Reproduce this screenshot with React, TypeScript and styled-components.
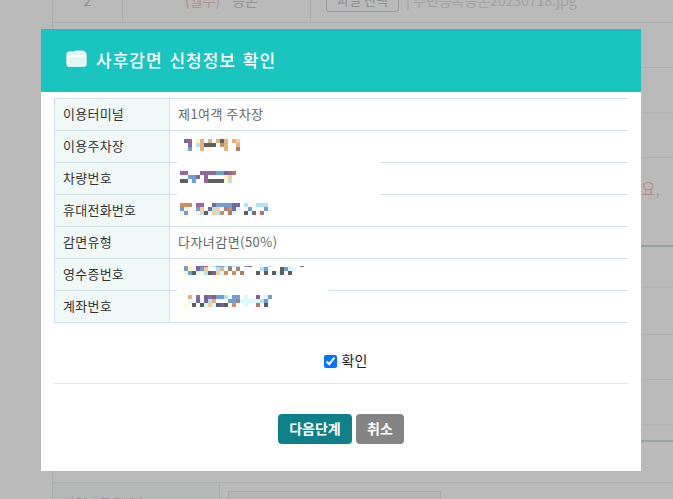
import React from 'react';
import styled, { createGlobalStyle } from 'styled-components';

const Global = createGlobalStyle`
  html, body { margin: 0; padding: 0; background: #fff; }
  body { font-family: "Noto Sans CJK KR", "Noto Sans", sans-serif; }
  #root { width: 673px; height: 499px; overflow: hidden; }
`;

const Page = styled.div`
  position: relative;
  width: 673px;
  height: 499px;
  overflow: hidden;
  background: #fff;
`;

const BackTable = styled.div`
  margin: -23px 0 0 52px;
  display: flex;
  flex-direction: column;
  border-left: 1px solid #ececec;
`;

const BackRow = styled.div<{ $h: number; $thick?: boolean }>`
  height: ${p => p.$h}px;
  box-sizing: border-box;
  display: flex;
  align-items: center;
  flex: none;
  border-bottom: ${p => (p.$thick ? '2px solid #cbe3e2' : '1px solid #eff0f0')};
`;

const NumCell = styled.div`
  width: 69px;
  height: 100%;
  display: flex;
  align-items: center;
  justify-content: center;
  border-right: 1px solid #eeeeee;
  font-size: 14px;
  color: #c4c4c4;
`;

const TypeCell = styled.div`
  width: 188px;
  height: 100%;
  box-sizing: border-box;
  padding-left: 62px;
  display: flex;
  align-items: center;
  gap: 12px;
  border-right: 1px solid #eeeeee;
  font-size: 14px;
  color: #cccccc;
`;

const Pink = styled.span`
  color: #f0c6c6;
`;

const FileCell = styled.div`
  padding-left: 15px;
  display: flex;
  align-items: center;
  gap: 7px;
  font-size: 14px;
  color: #dddddd;
  white-space: nowrap;
`;

const FileButton = styled.div`
  width: 73px;
  height: 24px;
  box-sizing: border-box;
  border: 1px solid #cfcfcf;
  border-radius: 3px;
  display: flex;
  align-items: center;
  justify-content: center;
  font-size: 13px;
  color: #c4c4c4;
`;

const OverflowNote = styled.div`
  align-self: flex-start;
  margin: 18px 0 0 588px;
  font-size: 16px;
  font-weight: 300;
  line-height: 24px;
  color: #f0b4b4;
  white-space: nowrap;
`;

const BottomLabel = styled.div`
  width: 167px;
  height: 100%;
  box-sizing: border-box;
  padding: 11px 0 0 10px;
  background: #f8fdfb;
  border-right: 1px solid #eeeeee;
  font-size: 13px;
  line-height: 18px;
  color: #c8c8c8;
  white-space: nowrap;
`;

const BottomField = styled.div`
  width: 213px;
  height: 30px;
  margin: 8px 0 0 8px;
  align-self: flex-start;
  box-sizing: border-box;
  border: 1px solid #e8e8e8;
  background: #fbf9f9;
`;

const Backdrop = styled.div`
  position: absolute;
  inset: 0;
  background: rgba(0, 0, 0, 0.27);
`;

const Modal = styled.div`
  position: absolute;
  left: 41px;
  top: 29px;
  width: 600px;
  height: 442px;
  background: #fff;
  display: flex;
  flex-direction: column;
`;

const Header = styled.div`
  height: 63px;
  flex: none;
  background: #1ac4bf;
  display: flex;
  align-items: center;
  gap: 9px;
  padding-left: 25px;
`;

const FolderSvg = styled.svg`
  flex: none;
  margin-bottom: 5px;
`;

const Title = styled.h2`
  margin: 0 0 3px;
  font-size: 17px;
  font-weight: 500;
  letter-spacing: 1px;
  word-spacing: 2px;
  color: #fff;
`;

const Body = styled.div`
  padding: 6px 13px 0;
  display: flex;
  flex-direction: column;
`;

const InfoTable = styled.table`
  width: 574px;
  border-collapse: collapse;
  table-layout: fixed;
`;

const Label = styled.th`
  width: 115px;
  height: 32px;
  box-sizing: border-box;
  padding: 0 0 2px 8px;
  background: #f1f9f8;
  border: 1px solid #d2e3e6;
  font-size: 13px;
  font-weight: 400;
  letter-spacing: 0.25px;
  text-align: left;
  color: #333;
`;

const Value = styled.td`
  position: relative;
  height: 32px;
  box-sizing: border-box;
  padding: 0 0 2px 8px;
  border-top: 1px solid #d2e3e6;
  border-bottom: 1px solid #d2e3e6;
  font-size: 13px;
  letter-spacing: 0.45px;
  color: #666;
`;

const Mosaic = styled.svg<{ $x: number; $y: number }>`
  position: absolute;
  left: ${p => p.$x}px;
  top: ${p => p.$y}px;
  display: block;
`;

const LineMask = styled.span<{ $w: number }>`
  position: absolute;
  left: 7px;
  bottom: -2px;
  width: ${p => p.$w}px;
  height: 3px;
  background: #fff;
`;

const ConfirmRow = styled.label`
  margin-top: 30px;
  height: 16px;
  padding: 0 0 0 9px;
  display: flex;
  align-items: center;
  justify-content: center;
  gap: 5px;
  font-size: 14px;
  line-height: 16px;
  color: #222;
`;

const ConfirmText = styled.span`
  margin-top: -2px;
`;

const Check = styled.input`
  margin: 0;
  width: 13px;
  height: 13px;
  accent-color: #0075ff;
`;

const Divider = styled.hr`
  margin: 14px 0 0;
  border: 0;
  border-top: 1px solid #e3e8e8;
`;

const Actions = styled.div`
  margin-top: 30px;
  display: flex;
  justify-content: center;
  gap: 4px;
`;

const Button = styled.button<{ $tone: string; $w: number }>`
  width: ${p => p.$w}px;
  height: 30px;
  padding: 0 0 3px;
  border: 0;
  border-radius: 4px;
  background: ${p => p.$tone};
  color: #fff;
  font-family: inherit;
  font-size: 14px;
  font-weight: 700;
`;

const palette: Record<string, string> = {
  p: '#93689c',
  u: '#74669f',
  b: '#6f9fd8',
  l: '#b4e3f3',
  c: '#d8fbff',
  y: '#fff8cc',
  t: '#e4b27e',
  o: '#fbcb8f',
  k: '#5f5f5f',
  r: '#b07a70',
  n: '#c89060',
};

type Blur = { x: number; y: number; clip?: number; rows: string[] };

const Pixels: React.FC<Blur> = ({ x, y, clip = 0, rows }) => {
  const cols = Math.max(...rows.map(r => r.length));
  const w = cols * 4;
  const h = rows.length * 4 - clip;
  return (
    <Mosaic $x={x} $y={y} width={w} height={h} viewBox={`0 ${clip} ${w} ${h}`} shapeRendering="crispEdges">
      {rows.map((row, j) =>
        row.split('').map((ch, i) =>
          ch === '.' ? null : <rect key={`${j}-${i}`} x={i * 4} y={j * 4} width={4} height={4} fill={palette[ch]} />,
        ),
      )}
    </Mosaic>
  );
};

const FolderIcon = () => (
  <FolderSvg width="21" height="17" viewBox="0 0 21 17" fill="none">
    <path d="M8 2.6 C9 .8 10.5 .5 12 .5 H16 C18 .5 19 1.6 19.3 3 H9 Z" fill="#e4f8f6" />
    <rect x="1.2" y="2.2" width="18.6" height="13.8" rx="2.6" fill="#dff6f4" stroke="#fff" strokeWidth="1.6" />
    <path d="M2 7 C2 5.6 3 5 4.4 5 H19.6 V7 H4.5 C3.6 7 3 7.6 3 8.5 V15 H2 Z" fill="#fff" />
  </FolderSvg>
);

export default function App() {
  return (
    <Page>
      <Global />
      <BackTable>
        <BackRow $h={46}>
          <NumCell>2</NumCell>
          <TypeCell>
            <Pink>(월수)</Pink> 등본
          </TypeCell>
          <FileCell>
            <FileButton>파일 선택</FileButton>
            <span>| 주민등록등본20230718.jpg</span>
          </FileCell>
        </BackRow>
        <BackRow $h={45} />
        <BackRow $h={45} />
        <BackRow $h={45} />
        <BackRow $h={89} $thick>
          <OverflowNote>요,</OverflowNote>
        </BackRow>
        <BackRow $h={41} />
        <BackRow $h={47} />
        <BackRow $h={45} />
        <BackRow $h={45} />
        <BackRow $h={17} $thick />
        <BackRow $h={41} />
        <BackRow $h={40}>
          <BottomLabel>사업자등록번호</BottomLabel>
          <BottomField />
        </BackRow>
      </BackTable>
      <Backdrop />
      <Modal role="dialog">
        <Header>
          <FolderIcon />
          <Title>사후감면 신청정보 확인</Title>
        </Header>
        <Body>
          <InfoTable>
            <tbody>
              <tr>
                <Label>이용터미널</Label>
                <Value>제1여객 주차장</Value>
              </tr>
              <tr>
                <Label>이용주차장</Label>
                <Value>
                  <Pixels x={14} y={8} rows={['up.yt.t.tkt.to', '.p.ltkkk.nt..t', '.b..t.y...t..r']} />
                  <LineMask $w={203} />
                </Value>
              </tr>
              <tr>
                <Label>차량번호</Label>
                <Value>
                  <Pixels x={10} y={8} rows={['pp...ppppbbupr', '..bbu.p....yo', 'kk.b..pkkkkyl']} />
                  <LineMask $w={203} />
                </Value>
              </tr>
              <tr>
                <Label>휴대전화번호</Label>
                <Value>
                  <Pixels
                    x={10}
                    y={8}
                    rows={['nnn.pp..ubbbbuu.l..lll', 'by..bo.ulo.rnuc..b...b', 'yb..ylkcoln.rc..k.u.r']}
                  />
                </Value>
              </tr>
              <tr>
                <Label>감면유형</Label>
                <Value>다자녀감면(50%)</Value>
              </tr>
              <tr>
                <Label>영수증번호</Label>
                <Value>
                  <Pixels
                    x={14}
                    y={7}
                    clip={3}
                    rows={[
                      'ny.upp.lbblbll.bu....l.......u',
                      'by.ubo..lt.r.r.....lb...kbcc',
                      'ybkcylkuocn.n.r...k.k.kck.k',
                    ]}
                  />
                  <LineMask $w={152} />
                </Value>
              </tr>
              <tr>
                <Label>계좌번호</Label>
                <Value>
                  <Pixels
                    x={14}
                    y={4}
                    rows={[
                      '.t.p.upubbl.bb.c..u.cb',
                      '.c.u.ult...bbrccccclb',
                      'y.k.kcockuk.n..c..r.k',
                    ]}
                  />
                </Value>
              </tr>
            </tbody>
          </InfoTable>
          <ConfirmRow>
            <Check type="checkbox" defaultChecked />
            <ConfirmText>확인</ConfirmText>
          </ConfirmRow>
          <Divider />
          <Actions>
            <Button $tone="#0e8188" $w={74}>다음단계</Button>
            <Button $tone="#848484" $w={48}>취소</Button>
          </Actions>
        </Body>
      </Modal>
    </Page>
  );
}
